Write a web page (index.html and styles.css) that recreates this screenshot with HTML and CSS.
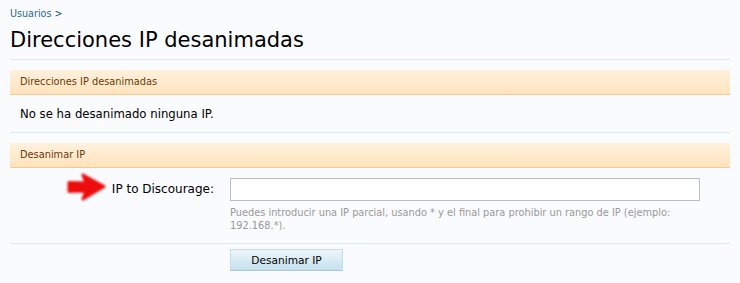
FILE: index.html
```html
<!DOCTYPE html>
<html>
<head>
<meta charset="utf-8">
<link rel="stylesheet" href="styles.css">
</head>
<body>
<div class="page">
  <div class="breadcrumb"><a href="#">Usuarios</a> <span class="sep">&gt;</span></div>
  <h1 class="title">Direcciones IP desanimadas</h1>

  <div class="section">
    <h2 class="section-head">Direcciones IP desanimadas</h2>
    <p class="section-body">No se ha desanimado ninguna IP.</p>
  </div>

  <form class="section form">
    <h2 class="section-head">Desanimar IP</h2>
    <div class="form-row">
      <div class="label-col">
        <svg class="arrow" width="44" height="32" viewBox="0 0 44 32">
          <defs>
            <filter id="blur" x="-20%" y="-20%" width="140%" height="140%">
              <feGaussianBlur stdDeviation="1.2"/>
            </filter>
          </defs>
          <path d="M5 11.5 L22 12 L19 4 L40 15.5 L19 28 L22 20 L5 20.5 Z" fill="#ee1111" stroke="#ee1111" stroke-width="3" stroke-linejoin="round" filter="url(#blur)"/>
        </svg>
        <label class="label" for="ip">IP to Discourage:</label>
      </div>
      <div class="input-col">
        <input id="ip" class="text-input" type="text">
        <p class="hint">Puedes introducir una IP parcial, usando * y el final para prohibir un rango de IP (ejemplo: 192.168.*).</p>
      </div>
    </div>
    <div class="submit-row">
      <button type="button" class="button">Desanimar IP</button>
    </div>
  </form>
</div>
</body>
</html>
```

FILE: styles.css
```css
html, body {
  margin: 0;
  padding: 0;
  background: #fafbfd;
}
body {
  font-family: "DejaVu Sans", Verdana, sans-serif;
  color: #000;
}
.page {
  padding: 7px 10px 0 10px;
}
.breadcrumb {
  font-size: 9.6px;
  line-height: 13px;
  color: #1d4b6b;
}
.breadcrumb a {
  color: #2a6a8c;
  text-decoration: none;
}
.title {
  margin: 0;
  padding: 8px 0 7px 0;
  font-size: 21px;
  font-weight: normal;
  line-height: 24px;
  color: #000;
  border-bottom: 1px solid #d7edf4;
}
.section {
  margin-top: 10px;
}
.section-head {
  margin: 0;
  height: 24px;
  line-height: 24px;
  padding: 0 10px;
  font-size: 9.8px;
  font-weight: normal;
  color: #6a3a0a;
  background: linear-gradient(#fff1dd, #ffe3bd);
  border-bottom: 1px solid #f9c98e;
}
.section-body {
  margin: 0;
  padding: 0 10px;
  height: 37px;
  line-height: 39px;
  font-size: 11.7px;
  border-bottom: 1px solid #d7edf4;
}
.form-row {
  display: flex;
  padding-top: 10px;
  height: 65px;
  border-bottom: 1px solid #d7edf4;
}
.label-col {
  width: 220px;
  display: flex;
  justify-content: flex-end;
  align-items: flex-start;
  padding-right: 16px;
  box-sizing: border-box;
  position: relative;
}
.arrow {
  position: absolute;
  left: 54px;
  top: -7px;
}
.label {
  font-size: 12px;
  line-height: 23px;
}
.input-col {
  width: 470px;
}
.text-input {
  display: block;
  box-sizing: border-box;
  width: 470px;
  height: 23px;
  margin: 0;
  border: 1px solid #bdbdbd;
  background: #fff;
  font-family: inherit;
}
.hint {
  margin: 5px 0 0 0;
  font-size: 9.8px;
  line-height: 13px;
  color: #999;
}
.submit-row {
  padding: 5px 0 0 220px;
}
.button {
  width: 113px;
  height: 22px;
  padding: 0;
  font-family: "DejaVu Sans", Verdana, sans-serif;
  font-size: 10.6px;
  color: #000;
  background: linear-gradient(#eef6fa, #c3e1ee);
  border: 1px solid #c9dde6;
  border-bottom-color: #a9c9d8;
}
```
